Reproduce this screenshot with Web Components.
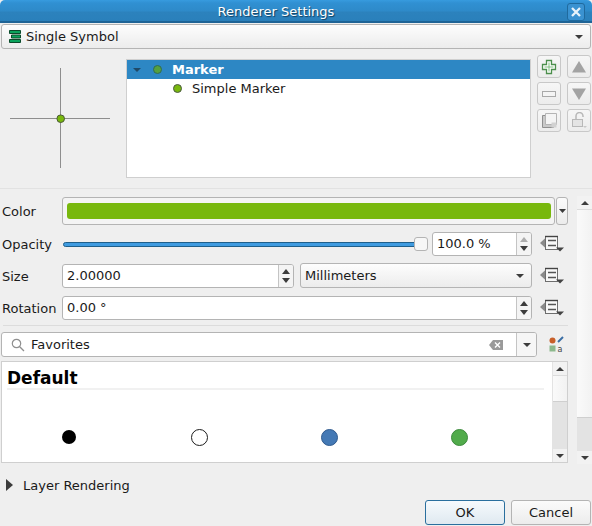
<!DOCTYPE html>
<html><head><meta charset="utf-8"><title>Renderer Settings</title>
<style>
html,body{margin:0;padding:0;background:#efefef}
body{width:592px;height:526px;overflow:hidden;font:13px "DejaVu Sans",sans-serif;color:#1a1a1a}
</style></head><body>
<renderer-dialog></renderer-dialog>
<script>
const ARROW=(c='#3c3c3c')=>`<svg width="8" height="4" viewBox="0 0 8 4"><path d="M0 0h8L4 4z" fill="${c}"/></svg>`;
function def(name,css,html){
  customElements.define(name,class extends HTMLElement{
    connectedCallback(){
      if(this.shadowRoot)return;
      const r=this.attachShadow({mode:'open'});
      const get=k=>this.getAttribute(k)||'';
      r.innerHTML=`<style>${css}</style>`+(typeof html==='function'?html(get):html);
    }
  });
}
def('title-bar',`:host{display:flex;align-items:center;justify-content:center;height:23px;box-sizing:border-box;flex:none;position:relative;border-radius:5px 5px 0 0;padding-right:40px;
  background:linear-gradient(#379bdf 0,#3090d2 3px,#2e8ac9 11px,#2c82bd 12px,#2a80bb 21px,#1f6496 21px,#1f6496 23px);color:#fff;text-shadow:1px 1px 1px #123f5f;font-size:13px}
  .x{position:absolute;right:7px;top:3px;width:18px;height:18px;box-sizing:border-box;border:1px solid #1f6a9e;border-radius:3px;display:flex;align-items:center;justify-content:center;background:#3a92d1}`,
  `<slot></slot><span class="x"><svg width="10" height="10" viewBox="0 0 10 10"><path d="M1 1l8 8M9 1l-8 8" stroke="#e8f3fb" stroke-width="2.300"/></svg></span>`);
def('combo-box',`:host{display:flex;align-items:center;box-sizing:border-box;height:25px;border:1px solid #b4b4b4;border-radius:3px;background:linear-gradient(#fdfdfd,#ececec);padding:0 7px 0 4px;gap:4px}
  .t{flex:1;white-space:nowrap}`,`<slot name="icon"></slot><span class="t"><slot></slot></span>${ARROW()}`);
def('tool-btn',`:host{display:flex;align-items:center;justify-content:center;width:24px;height:23px;box-sizing:border-box;border:1px solid #c8c8c8;border-radius:3px;background:linear-gradient(#f6f6f6,#ececec)}`,`<slot></slot>`);
def('symbol-tree',`:host{display:block;box-sizing:border-box;width:405px;height:119px;border:1px solid #cfcfcf;background:#fff}
  .row{height:19px;display:flex;align-items:center;position:relative}
  .sel{background:#2d87c4;color:#fff;font-weight:bold}
  .arrow{margin-left:6px;width:9px;display:flex}
  .dot{width:7px;height:7px;border-radius:50%;border:1px solid #4c5a44;display:block;flex:none}
  .sel .dot{background:#55a03f;border-color:#2f6b55;margin-left:11px}
  .sel .tx{margin-left:10px}
  .sub .dot{background:#78b80d;margin-left:46px}
  .sub .tx{margin-left:10px}`,
  `<div class="row sel"><span class="arrow">${ARROW('#1f4a68')}</span><span class="dot"></span><span class="tx">Marker</span></div>
   <div class="row sub"><span class="dot"></span><span class="tx">Simple Marker</span></div>`);
def('symbol-preview',`:host{display:block;width:100px;height:100px;flex:none;position:relative}
  svg{display:block}`,`<svg width="100" height="100" viewBox="0 0 100 100"><path d="M50.500 0v100M0 50.500h100" stroke="#8e8e8e" fill="none"/><circle cx="50.700" cy="50.700" r="3.800" fill="#78b80d" stroke="#4a5a35"/></svg>`);
def('color-button',`:host{display:flex;flex:none;width:506px;height:28px;gap:1px}
  .b{flex:1;box-sizing:border-box;border:1px solid #b4b4b4;border-radius:3px;background:#f4f4f4;padding:5px 3px 5px 4px;display:flex}
  .c{flex:1;background:#78b80d;border-radius:3px}
  .d{width:12px;box-sizing:border-box;border:1px solid #b4b4b4;border-radius:3px;background:linear-gradient(#fbfbfb,#ececec);display:flex;align-items:center;justify-content:center}`,
  `<div class="b"><div class="c"></div></div><div class="d"><svg width="7" height="4" viewBox="0 0 7 4"><path d="M0 0h7L3.500 4z" fill="#3c3c3c"/></svg></div>`);
def('spin-box',`:host{display:flex;box-sizing:border-box;height:24px;border:1px solid #b4b4b4;border-radius:3px;background:#fff;overflow:hidden}
  .t{flex:1;padding-left:4px;line-height:22px;white-space:nowrap}
  .s{width:14px;border-left:1px solid #c4c4c4;background:#f4f4f4;display:flex;flex-direction:column;align-items:center;justify-content:center;gap:4px}
  svg{display:block}`,g=>`<span class="t"><slot></slot></span><span class="s"><svg width="8" height="5" viewBox="0 0 8 5"><path d="M4 0l4 5H0z" fill="${g('dim')?'#adadad':'#3c3c3c'}"/></svg><svg width="8" height="5" viewBox="0 0 8 5"><path d="M0 0h8L4 5z" fill="#3c3c3c"/></svg></span>`);
def('opacity-slider',`:host{display:flex;align-items:center;height:14px;position:relative;width:365px;flex:none}
  .g{flex:1;height:5px;box-sizing:border-box;border:1px solid #1f5f8b;border-radius:3px;background:#3f9be0;margin-right:7px}
  .h{position:absolute;right:0;top:0;width:14px;height:14px;box-sizing:border-box;border:1px solid #b4b4b4;border-radius:3px;background:#f7f7f7}`,`<div class="g"></div><div class="h"></div>`);
def('data-btn',`:host{display:block;width:25px;height:20px;flex:none}svg{display:block}`,
  `<svg width="25" height="20" viewBox="0 0 25 20"><path d="M0 9l6-5.500v11z" fill="#8a8a8a"/><rect x="5.500" y="2.500" width="12" height="13" fill="#f8f8f8" stroke="#6e6e6e"/><path d="M5 2.500h13" stroke="#444" stroke-width="1.400"/><path d="M8 6.500h8M8 11.500h8" stroke="#555" stroke-width="1.300"/><path d="M16 13.500h8l-4 4z" fill="#444"/></svg>`);
def('form-row',`:host{display:flex;align-items:center;flex:none}
  .l{width:60px;flex:none;white-space:nowrap}
  .r{display:flex;align-items:center;flex:1;min-width:0}`,
  g=>`<span class="l">${g('label')}</span><span class="r"><slot></slot></span>`);
def('search-box',`:host{display:flex;box-sizing:border-box;width:536px;height:25px;border:1px solid #b4b4b4;border-radius:3px;background:#fff;overflow:hidden}
  .i{width:29px;display:flex;align-items:center;justify-content:center;padding-left:2px;box-sizing:border-box}
  .t{flex:1;line-height:23px}
  .c{width:20px;margin-right:7px;display:flex;align-items:center}
  .d{width:19px;border-left:1px solid #c4c4c4;background:#f6f6f6;display:flex;align-items:center;justify-content:center}`,
  `<span class="i"><svg width="14" height="14" viewBox="0 0 14 14"><circle cx="5.500" cy="5.500" r="4.200" fill="none" stroke="#8f8f8f" stroke-width="1.200"/><path d="M8.700 8.700l4.300 4.300" stroke="#8f8f8f" stroke-width="1.300"/></svg></span>
   <span class="t"><slot></slot></span>
   <span class="c"><svg width="14" height="10" viewBox="0 0 14 10"><path d="M0 5l4-5h10v10H4z" fill="#9a9a9a"/><path d="M6 2.500l5 5M11 2.500l-5 5" stroke="#fff" stroke-width="1.400"/></svg></span>
   <span class="d">${ARROW()}</span>`);
def('v-scroll',`:host{display:flex;flex-direction:column;flex:none;box-sizing:border-box;background:#e3e3e3;--w:15px;width:var(--w)}
  .b{height:13px;flex:none;background:#f2f2f2;display:flex;align-items:center;justify-content:center}
  .th{background:linear-gradient(90deg,#fafafa,#f2f2f2);border-bottom:1px solid #cfcfcf;border-top:1px solid #dcdcdc;box-sizing:border-box}
  .tr{flex:1}
  svg{display:block}`,
  g=>`<span class="b"><svg width="8" height="4" viewBox="0 0 8 4"><path d="M4 0l4 4H0z" fill="#3c3c3c"/></svg></span><span class="th" style="height:${g('thumb')}px"></span><span class="tr"></span><span class="b"><svg width="8" height="4" viewBox="0 0 8 4"><path d="M0 0h8L4 4z" fill="#3c3c3c"/></svg></span>`);
def('symbol-list',`:host{display:flex;box-sizing:border-box;width:567px;height:102px;border:1px solid #cfcfcf;background:#fff;flex:none}
  .m{flex:1;min-width:0;padding:7px 8px 0 5px}
  h2{margin:0;font:bold 17px "DejaVu Sans",sans-serif;color:#000;line-height:19px;height:19px;border-bottom:2px solid #f1f1f1;box-sizing:content-box}
  .g{display:grid;grid-template-columns:repeat(4,130px);margin-top:39px;justify-items:center;margin-left:-3px}
  .o{width:16px;height:16px;border-radius:50%;box-sizing:border-box}
  v-scroll{border-left:1px solid #e3e3e3}`,
  `<div class="m"><h2>Default</h2><div class="g">
    <span class="o" style="background:#000;width:14px;height:14px;margin-top:1px"></span>
    <span class="o" style="background:#fff;border:1.500px solid #1c1c1c;width:17px;height:17px"></span>
    <span class="o" style="background:#4479b5;border:1px solid #2f5a8e;width:17px;height:17px"></span>
    <span class="o" style="background:#51ab4b;border:1px solid #3c8a3c;width:17px;height:17px"></span>
  </div></div><v-scroll thumb="27" style="--w:15px"></v-scroll>`);
def('dlg-button',`:host{display:flex;align-items:center;justify-content:center;width:80px;height:25px;box-sizing:border-box;border:1px solid #b4b4b4;border-radius:3px;background:linear-gradient(#fbfbfb,#ececec)}
  :host([primary]){border-color:#2a6f9e;background:linear-gradient(#f6fafd,#dfe9f0)}`,`<slot></slot>`);

def('renderer-dialog',`:host{display:flex;flex-direction:column;width:592px;height:526px;box-sizing:border-box}
  .combo{margin:1px 1px 0 1px;flex:none}
  .sym{flex:none;display:flex;position:relative;border-bottom:1px solid #e2e2e2;box-sizing:border-box;height:140px}
  symbol-preview{margin:19px 16px 0 10px}
  symbol-tree{margin-top:10px}
  .tools{display:grid;grid-template-columns:24px 24px;grid-auto-rows:23px;gap:4px 6px;margin:6px 0 0 6px;align-content:start}
  .scroll{display:flex;flex:none;height:268px;margin-top:7px}
  .main{width:568px;padding:1px 0 0 2px;display:flex;flex-direction:column;flex:none;box-sizing:border-box}
  .hr{height:1px;background:#dcdcdc;width:565px;margin:5px 0 6px 1px;flex:none}
  .lr{display:flex;align-items:center;gap:10px;height:20px;margin:11px 0 5px 6px;flex:none}
  .foot{display:flex;justify-content:flex-end;gap:6px;padding-right:1px;flex:none}`,
  `<title-bar>Renderer Settings</title-bar>
   <div class="combo"><combo-box><svg slot="icon" style="margin-left:2px;margin-right:-2px" width="16" height="15" viewBox="0 0 16 15"><path d="M1.500 1.500h11v3h-11zM3.500 6h9v3h-9zM1.500 10.500h11v3h-11z" fill="#0aa35c" stroke="#0a4a2b"/></svg>Single Symbol</combo-box></div>
   <div class="sym">
     <symbol-preview></symbol-preview>
     <symbol-tree></symbol-tree>
     <div class="tools">
       <tool-btn><svg width="16" height="16" viewBox="0 0 16 16"><path d="M5.500 1.500h5v4h4v5h-4v4h-5v-4h-4v-5h4z" fill="#fff" stroke="#4c8f4c" stroke-width="1.300"/><path d="M8 3.500v9M3.500 8h9" stroke="#7fbf7f" stroke-width="1"/></svg></tool-btn>
       <tool-btn><svg width="16" height="12" viewBox="0 0 16 12"><path d="M8 0l7 11.500H1z" fill="#a3a3a3"/></svg></tool-btn>
       <tool-btn><svg width="14" height="6" viewBox="0 0 14 6"><rect x=".5" y=".5" width="13" height="5" fill="#f4f4f4" stroke="#a9a9a9"/></svg></tool-btn>
       <tool-btn><svg width="16" height="12" viewBox="0 0 16 12"><path d="M8 12L1 .5h14z" fill="#a3a3a3"/></svg></tool-btn>
       <tool-btn><svg width="15" height="15" viewBox="0 0 15 15"><path d="M.5 2.500h11v12H.5z" fill="#c9c9c9" stroke="#8f8f8f"/><path d="M3.500.5h11v11h-11z" fill="#f4f4f4" stroke="#b4b4b4"/><rect x="9.500" y="9.500" width="5" height="5" fill="#d2d2d2"/></svg></tool-btn>
       <tool-btn><svg width="16" height="17" viewBox="0 0 16 17"><path d="M5 7V4a3.500 3.500 0 017 0v1" fill="none" stroke="#b8b8b8" stroke-width="1.500"/><rect x="1.500" y="7.500" width="10" height="7" fill="#e4e4e4" stroke="#b8b8b8"/><path d="M12 14h4l-2 2z" fill="#c8c8c8"/></svg></tool-btn>
     </div>
   </div>
   <div class="scroll">
     <div class="main">
       <form-row label="Color" style="height:28px"><color-button></color-button></form-row>
       <form-row label="Opacity" style="height:24px;margin-top:7px"><span style="width:1px"></span><opacity-slider></opacity-slider><spin-box dim="1" style="width:100px;margin-left:4px">100.0 %</spin-box><data-btn style="margin-left:8px"></data-btn></form-row>
       <form-row label="Size" style="height:24px;margin-top:8px"><spin-box style="width:232px">2.00000</spin-box><combo-box style="width:232px;height:25px;margin:-1px 0 0 6px;padding-right:7px">Millimeters</combo-box><data-btn style="margin-left:8px"></data-btn></form-row>
       <form-row label="Rotation" style="height:24px;margin-top:8px"><spin-box style="width:470px">0.00 °</spin-box><data-btn style="margin-left:8px"></data-btn></form-row>
       <div class="hr"></div>
       <div style="display:flex;align-items:center;flex:none;margin-left:-1px">
         <search-box>Favorites</search-box>
         <svg style="margin-left:10px" width="18" height="18" viewBox="0 0 18 18"><circle cx="5.500" cy="4.500" r="3" fill="#c8602a"/><rect x="2.500" y="9.500" width="6" height="6" fill="#8db98d"/><path d="M11 6l5-5" stroke="#3a6ea5" stroke-width="2"/><text x="10.500" y="15.500" font-family="DejaVu Sans" font-size="8" fill="#444">a</text></svg>
       </div>
       <symbol-list style="margin:4px 0 0 -1px"></symbol-list>
     </div>
     <v-scroll class="sb" thumb="209" style="margin-left:9px;height:268px"></v-scroll>
   </div>
   <div class="lr"><svg width="7" height="12" viewBox="0 0 7 12"><path d="M0 0l7 6-7 6z" fill="#3c3c3c"/></svg><span>Layer Rendering</span></div>
   <div class="foot"><dlg-button primary>OK</dlg-button><dlg-button>Cancel</dlg-button></div>`);
</script>
</body></html>
